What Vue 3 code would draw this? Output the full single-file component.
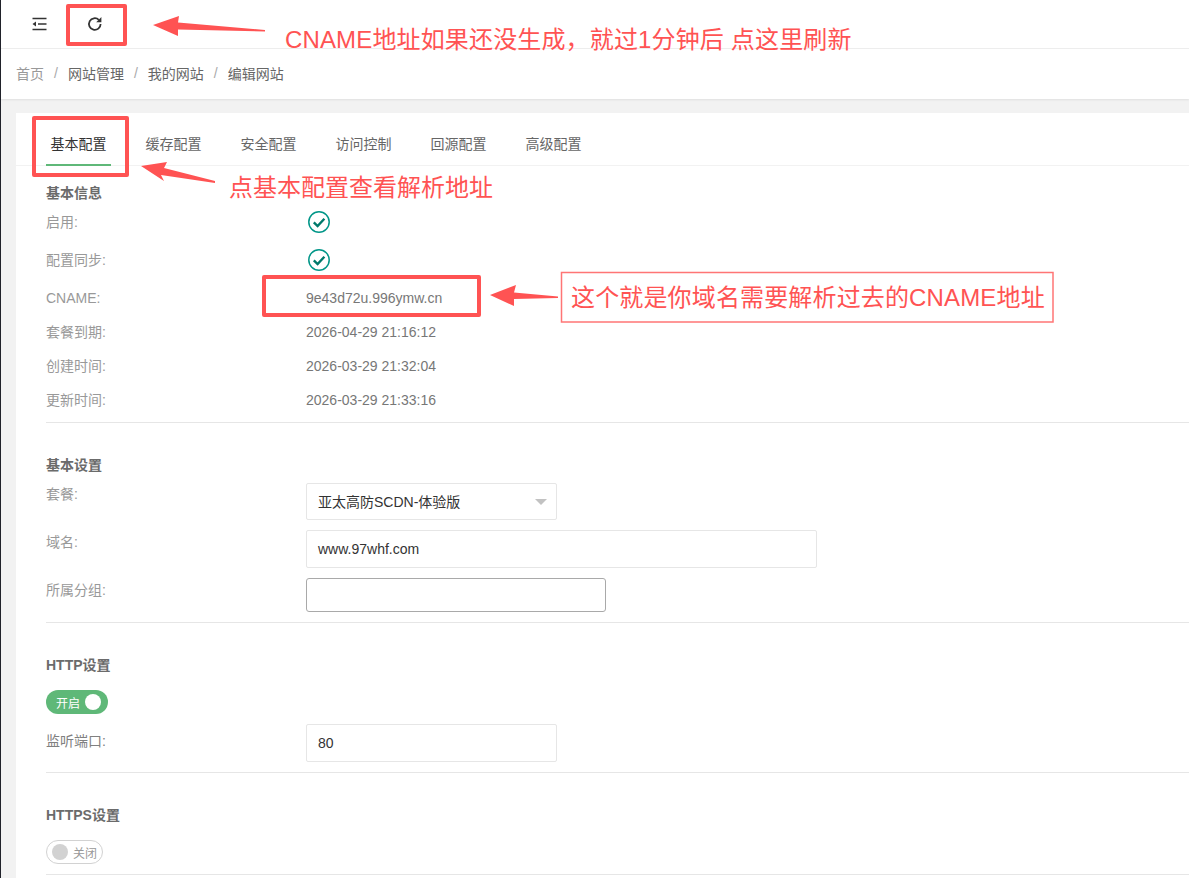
<template>
  <div class="page">
    <header class="topbar">
      <svg class="icon-fold" width="16" height="14" viewBox="0 0 16 14">
        <path d="M0.500 1.500h14M6 7h8.500M0.500 12.500h14" stroke="#333" stroke-width="1.6" fill="none" />
        <path d="M0.500 7l3.500-2.400v4.800z" fill="#333" />
      </svg>
      <svg class="icon-refresh" width="16" height="16" viewBox="0 0 16 16">
        <path d="M13.600 8a5.800 5.800 0 1 1-1.800-4.200" stroke="#333" stroke-width="1.800" fill="none" />
        <path d="M14.400 1v5.200H9.200z" fill="#333" />
      </svg>
    </header>

    <nav class="crumbs">
      <template v-for="(c, i) in crumbs" :key="c">
        <span v-if="i" class="sep">/</span>
        <span :class="{ first: i === 0 }">{{ c }}</span>
      </template>
    </nav>

    <main class="body">
      <section class="card">
        <ul class="tabs">
          <li v-for="(t, i) in tabs" :key="t" :class="{ active: i === 0 }">{{ t }}</li>
        </ul>

        <div class="content">
          <h3 class="title first-title">基本信息</h3>
          <div class="row tall">
            <span class="label">启用:</span>
            <svg class="check" width="24" height="24" viewBox="0 0 24 24">
              <circle cx="12" cy="12" r="10.200" fill="none" stroke="#009688" stroke-width="1.500" />
              <path d="M6.800 12.300l3.800 3.700 6.800-7.200" fill="none" stroke="#00796b" stroke-width="2.400" />
            </svg>
          </div>
          <div class="row tall">
            <span class="label">配置同步:</span>
            <svg class="check" width="24" height="24" viewBox="0 0 24 24">
              <circle cx="12" cy="12" r="10.200" fill="none" stroke="#009688" stroke-width="1.500" />
              <path d="M6.800 12.300l3.800 3.700 6.800-7.200" fill="none" stroke="#00796b" stroke-width="2.400" />
            </svg>
          </div>
          <div class="row cname">
            <span class="label latin">CNAME:</span>
            <span class="value">9e43d72u.996ymw.cn</span>
          </div>
          <div v-for="m in meta" :key="m.label" class="row">
            <span class="label">{{ m.label }}:</span>
            <span class="value">{{ m.value }}</span>
          </div>
          <hr class="line info-line" />

          <h3 class="title">基本设置</h3>
          <div class="field">
            <span class="label">套餐:</span>
            <div class="select box">亚太高防SCDN-体验版<i class="caret"></i></div>
          </div>
          <div class="field">
            <span class="label lower">域名:</span>
            <div class="domain box">www.97whf.com</div>
          </div>
          <div class="field">
            <span class="label lower">所属分组:</span>
            <div class="group"></div>
          </div>
          <hr class="line" />

          <h3 class="title">HTTP设置</h3>
          <div class="switch on">开启<i class="knob"></i></div>
          <div class="field">
            <span class="label port-label">监听端口:</span>
            <div class="port box">80</div>
          </div>
          <hr class="line" />

          <h3 class="title">HTTPS设置</h3>
          <div class="switch off"><i class="knob"></i>关闭</div>
          <hr class="line" />
        </div>
      </section>
    </main>

    <!-- 截图上的红色标注 -->
    <svg class="marks" width="1189" height="878" viewBox="0 0 1189 878">
      <g fill="none" stroke="#ff5353" stroke-width="4" stroke-linejoin="round">
        <rect x="68" y="6" width="57" height="38" />
        <rect x="34" y="118" width="93" height="57" />
        <rect x="264" y="277" width="215" height="38" />
      </g>
      <rect x="561.500" y="272.500" width="491.500" height="49.500" fill="none" stroke="#ff7575" stroke-width="1.500" />
      <g fill="#ff5353">
        <polygon points="153,25 179,16 178,22.500 265,30 265,31.500 178,29.500 178,36" />
        <polygon points="141,166 167,162 164,168 215,181 215,183 161,175 164,181" />
        <polygon points="490,295 516,285 514,292.500 558,296.500 558,298 514,299 514,306" />
      </g>
    </svg>
    <div class="note note-top">CNAME地址如果还没生成，就过1分钟后 点这里刷新</div>
    <div class="note note-tab">点基本配置查看解析地址</div>
    <div class="note note-cname">这个就是你域名需要解析过去的CNAME地址</div>
  </div>
</template>

<script setup>
const crumbs = ['首页', '网站管理', '我的网站', '编辑网站'];
const tabs = ['基本配置', '缓存配置', '安全配置', '访问控制', '回源配置', '高级配置'];
const meta = [
  { label: '套餐到期', value: '2026-04-29 21:16:12' },
  { label: '创建时间', value: '2026-03-29 21:32:04' },
  { label: '更新时间', value: '2026-03-29 21:33:16' },
];
</script>

<style>
html,
body {
  margin: 0;
  overflow: hidden;
}
</style>

<style scoped>
.page {
  position: relative;
  width: 1189px;
  height: 878px;
  overflow: hidden;
  box-sizing: border-box;
  border-left: 1px solid #20222a;
  background: #f2f2f2;
  font-family: "Liberation Sans", "Noto Sans CJK SC", sans-serif;
  font-size: 14px;
  color: #666;
}

.topbar {
  height: 48px;
  background: #fff;
  border-bottom: 1px solid #eee;
  display: flex;
  align-items: center;
  padding-left: 31px;
}
.icon-refresh {
  margin-left: 39px;
}

.crumbs {
  height: 50px;
  box-sizing: border-box;
  background: #fff;
  display: flex;
  align-items: center;
  padding: 0 0 2px 15px;
  box-shadow: 0 1px 2px rgba(0, 0, 0, 0.08);
  position: relative;
}
.crumbs .first {
  color: #999;
}
.sep {
  margin: 0 10px;
  color: #aaa;
}

.body {
  padding: 14px 0 0 15px;
}
.card {
  background: #fff;
  height: 800px;
}

.tabs {
  list-style: none;
  margin: 0;
  padding: 0 0 0 30px;
  height: 53px;
  box-sizing: border-box;
  border-bottom: 1px solid #f2f2f2;
  display: flex;
  gap: 30px;
}
.tabs li {
  width: 65px;
  height: 53px;
  box-sizing: border-box;
  text-align: center;
  line-height: 62px;
}
.tabs li.active {
  color: #333;
  border-bottom: 2px solid #5fb878;
}

.content {
  padding-left: 30px;
}
.title {
  margin: 0 0 8px;
  padding-top: 32px;
  font-size: 14px;
  line-height: 20px;
  font-weight: 700;
  color: #6b6b6b;
}
.first-title {
  margin-bottom: 0;
  padding-top: 17px;
}

.row {
  height: 34px;
  display: flex;
  align-items: center;
}
.row.tall {
  height: 38px;
}
.row.cname {
  height: 36px;
  box-sizing: border-box;
  padding-top: 2px;
}
.label {
  width: 260px;
  flex: none;
  color: #999;
  padding-bottom: 2px;
}
.label.latin {
  padding-bottom: 0;
}
.value {
  color: #777;
}
.check {
  margin-left: 1px;
}

.line {
  margin: 0;
  border: 0;
  border-top: 1px solid #e6e6e6;
}
.info-line {
  margin-top: 5px;
}

.field {
  display: flex;
  margin-bottom: 10px;
}
.field .label {
  line-height: 23px;
  padding-bottom: 0;
}
.field .lower {
  line-height: 25px;
}
.field .port-label {
  line-height: 34px;
  color: #808080;
}
.box {
  height: 38px;
  box-sizing: border-box;
  border: 1px solid #e6e6e6;
  border-radius: 2px;
  padding-left: 11px;
  line-height: 37px;
  color: #333;
}
.select {
  width: 251px;
  height: 37px;
  line-height: 36px;
  position: relative;
}
.caret {
  position: absolute;
  right: 9px;
  top: 15px;
  border: 6px solid transparent;
  border-top-color: #c2c2c2;
  border-bottom: 0;
}
.domain {
  width: 511px;
}
.group {
  width: 300px;
  height: 34px;
  box-sizing: border-box;
  border: 1px solid #a9a9a9;
  border-radius: 3px;
}
.port {
  width: 251px;
}

.switch {
  height: 24px;
  box-sizing: border-box;
  border-radius: 12px;
  display: flex;
  align-items: center;
  font-size: 12px;
  margin-top: 15px;
  margin-bottom: 10px;
}
.switch.on {
  width: 62px;
  background: #5fb878;
  color: #fff;
  padding-left: 10px;
}
.switch.on .knob {
  margin-left: 5px;
  background: #fff;
}
.switch.off {
  width: 57px;
  border: 1px solid #d2d2d2;
  color: #999;
  padding-left: 5px;
}
.switch.off .knob {
  margin-right: 5px;
  background: #d2d2d2;
}
.knob {
  width: 16px;
  height: 16px;
  border-radius: 50%;
  flex: none;
}

.marks {
  position: absolute;
  left: -1px;
  top: 0;
  pointer-events: none;
}
.note {
  position: absolute;
  font-size: 24px;
  line-height: 32px;
  letter-spacing: 0.15px;
  color: #ff5353;
  white-space: nowrap;
}
.note-top {
  left: 284px;
  top: 24px;
}
.note-tab {
  left: 228px;
  top: 172px;
  letter-spacing: 0;
}
.note-cname {
  left: 570px;
  top: 282px;
}
</style>
